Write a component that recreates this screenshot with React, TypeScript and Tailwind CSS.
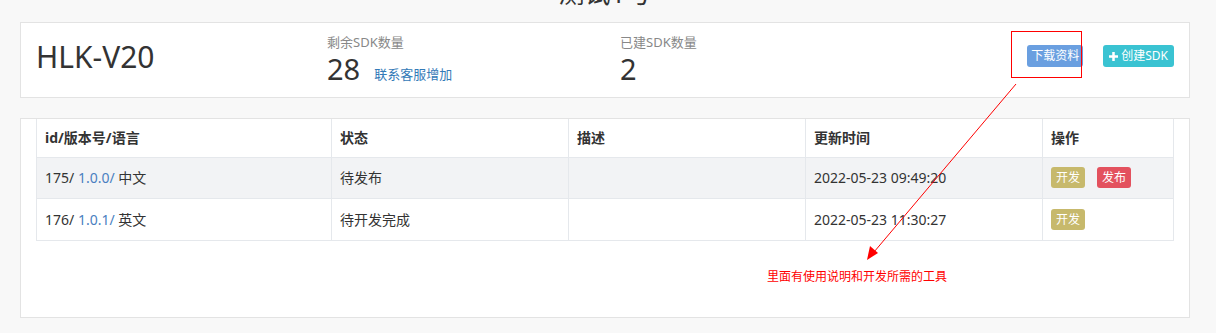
import React from "react";

const rows = [
  {
    id: 175,
    version: "1.0.0/",
    lang: "中文",
    status: "待发布",
    desc: "",
    time: "2022-05-23 09:49:20",
    publish: true,
  },
  {
    id: 176,
    version: "1.0.1/",
    lang: "英文",
    status: "待开发完成",
    desc: "",
    time: "2022-05-23 11:30:27",
    publish: false,
  },
];

const Stat = ({ label, value, link }: { label: string; value: string; link?: string }) => (
  <div className="flex flex-col">
    <span className="text-[13px] leading-[18px] text-[#888]">{label}</span>
    <div className="flex items-end gap-[14px]">
      <span className="text-[29px] leading-[36px] text-[#333]">{value}</span>
      {link && <a className="mb-[4px] text-[13px] leading-[18px] text-[#337ab7]">{link}</a>}
    </div>
  </div>
);

const App = () => {
  return (
    <div
      className="relative h-[333px] w-[1216px] overflow-hidden bg-[#f8f8f8]"
      style={{ fontFamily: '"Noto Sans", "Noto Sans CJK SC", sans-serif' }}
    >
      <div className="ml-[20px] flex w-[1170px] flex-col">
        <h2 className="-mt-[22px] h-[44px] text-center text-[26px] leading-[30px] text-[#333]">测试1号</h2>

        {/* summary card */}
        <div className="flex h-[76px] items-center border border-[#e3e3e3] bg-white pl-[15px] pr-[15px]">
          <div className="w-[291px] pb-[6px] text-[30px] leading-[36px] text-[#333]">HLK-V20</div>
          <div className="w-[293px]">
            <Stat label="剩余SDK数量" value="28" link="联系客服增加" />
          </div>
          <Stat label="已建SDK数量" value="2" />
          <div className="ml-auto flex gap-[20px] pb-[8px]">
            <button className="h-[22px] rounded-[3px] bg-[#6a9fe0] px-[4px] text-[12px] leading-[22px] text-white">
              下载资料
            </button>
            <button className="flex h-[22px] items-center gap-[3px] rounded-[3px] bg-[#3ac3d2] px-[6px] text-[12px] leading-[22px] text-white">
              <svg width="9" height="9" viewBox="0 0 10 10">
                <path d="M3.6 0h2.8v3.6H10v2.8H6.4V10H3.6V6.4H0V3.6h3.6z" fill="white" />
              </svg>
              创建SDK
            </button>
          </div>
        </div>

        {/* table card */}
        <div className="mt-[20px] h-[200px] border border-[#e3e3e3] bg-white px-[15px]">
          <table className="w-[1138px] border-collapse text-[14px] text-[#333]">
            <colgroup>
              <col className="w-[295px]" />
              <col className="w-[237px]" />
              <col className="w-[237px]" />
              <col className="w-[237px]" />
              <col />
            </colgroup>
            <thead>
              <tr className="h-[38px]">
                {["id/版本号/语言", "状态", "描述", "更新时间", "操作"].map((h) => (
                  <th
                    key={h}
                    className="border border-t-0 border-[#e5e8ec] px-[8px] text-left font-bold"
                  >
                    {h}
                  </th>
                ))}
              </tr>
            </thead>
            <tbody>
              {rows.map((r, i) => (
                <tr key={r.id} className={i === 0 ? "h-[41px] bg-[#f2f3f5]" : "h-[42px]"}>
                  <td className="border border-[#e5e8ec] px-[8px]">
                    {r.id}/ <span className="text-[#4a7fc1]">{r.version}</span> {r.lang}
                  </td>
                  <td className="border border-[#e5e8ec] px-[8px]">{r.status}</td>
                  <td className="border border-[#e5e8ec] px-[8px]">{r.desc}</td>
                  <td className="border border-[#e5e8ec] px-[8px]">{r.time}</td>
                  <td className="border border-[#e5e8ec] px-[8px]">
                    <div className="flex gap-[12px]">
                      <span className="h-[21px] rounded-[3px] bg-[#c7b96c] px-[5px] text-[12px] leading-[21px] text-white">
                        开发
                      </span>
                      {r.publish && (
                        <span className="h-[21px] rounded-[3px] bg-[#e3515e] px-[5px] text-[12px] leading-[21px] text-white">
                          发布
                        </span>
                      )}
                    </div>
                  </td>
                </tr>
              ))}
            </tbody>
          </table>
          <p className="ml-[731px] mt-[29px] text-[12px] leading-[14px] text-[#ff0000]">
            里面有使用说明和开发所需的工具
          </p>
        </div>
      </div>

      {/* annotation overlay: box, arrow */}
      <svg className="pointer-events-none absolute left-0 top-0" width="1216" height="333">
        <rect x="1011.5" y="31.5" width="70" height="46" fill="none" stroke="#ff0000" strokeWidth="1" />
        <line x1="1016" y1="84" x2="874" y2="252" stroke="#ff0000" strokeWidth="1" />
        <polygon points="867,260 870,246 878,253" fill="#ff0000" />
      </svg>
    </div>
  );
};

export default App;
